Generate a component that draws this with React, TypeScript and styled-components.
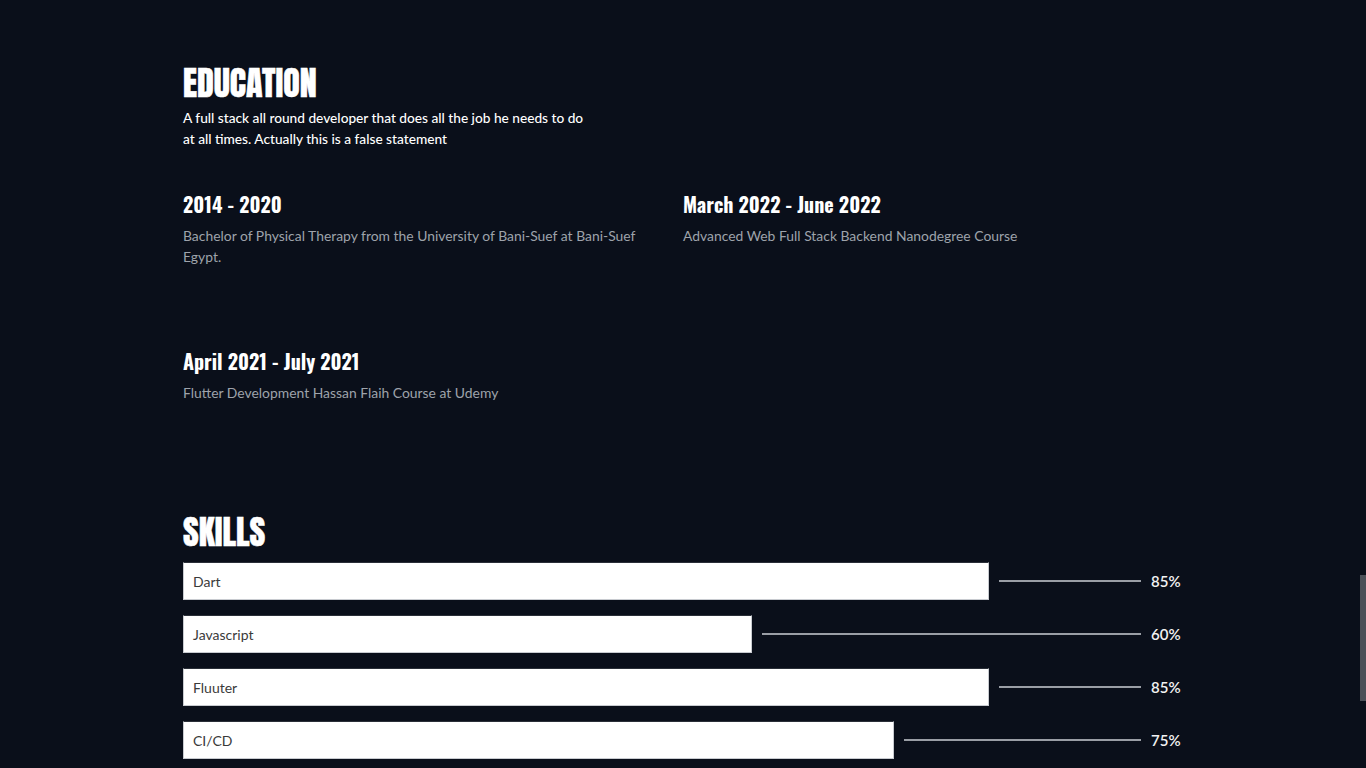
import styled, { createGlobalStyle } from "styled-components";

type Education = {
  period: string;
  text: string;
};

type Skill = {
  name: string;
  level: number;
};

const education: Education[] = [
  {
    period: "2014 - 2020",
    text: "Bachelor of Physical Therapy from the University of Bani-Suef at Bani-Suef Egypt.",
  },
  {
    period: "March 2022 - June 2022",
    text: "Advanced Web Full Stack Backend Nanodegree Course",
  },
  {
    period: "April 2021 - July 2021",
    text: "Flutter Development Hassan Flaih Course at Udemy",
  },
];

const skills: Skill[] = [
  { name: "Dart", level: 85 },
  { name: "Javascript", level: 60 },
  { name: "Fluuter", level: 85 },
  { name: "CI/CD", level: 75 },
];

// track width the bars are measured against
const TRACK = 948;

const GlobalStyle = createGlobalStyle`
  html, body {
    margin: 0;
    padding: 0;
    background-color: #0a0f1a;
    overflow: hidden;
  }
  body {
    font-family: Lato, "Noto Sans", sans-serif;
    color: #fff;
  }
`;

const Page = styled.main`
  width: 1000px;
  margin: 0 auto;
  padding-top: 60px;
`;

const Section = styled.section`
  margin-bottom: 80px;
`;

const Title = styled.h2`
  margin: 0 0 3px;
  padding-top: 2px;
  font-family: "Anton", "Oswald", "Liberation Sans Narrow", "DejaVu Sans Condensed", sans-serif;
  font-weight: 400;
  font-size: 34px;
  line-height: 42px;
  letter-spacing: 0;
  -webkit-text-stroke: 0.5px #fff;
  text-transform: uppercase;
`;

const Intro = styled.p`
  margin: 0 0 40px;
  max-width: 410px;
  font-size: 13.7px;
  font-weight: 500;
  line-height: 21px;
  color: #fff;
`;

const EduGrid = styled.div`
  display: grid;
  grid-template-columns: 1fr 1fr;
  row-gap: 74px;
`;

const EduItem = styled.div`
  min-height: 83px;
`;

const Period = styled.h3`
  margin: 0 0 6px;
  font-family: "Oswald", "Liberation Sans Narrow", "DejaVu Sans Condensed", sans-serif;
  font-weight: 700;
  font-size: 20px;
  line-height: 30px;
`;

const EduText = styled.p`
  margin: 0;
  max-width: 460px;
  font-size: 13.9px;
  line-height: 21px;
  color: #9ea3ab;
`;

const SkillList = styled.div`
  display: flex;
  flex-direction: column;
  gap: 15px;
  margin-top: 9px;
`;

const SkillRow = styled.div`
  display: flex;
  align-items: center;
  gap: 10px;
`;

const Bar = styled.div`
  box-sizing: border-box;
  height: 38px;
  display: flex;
  align-items: center;
  padding: 0 9px;
  background: #fff;
  border: 1px solid #c8cbd0;
  border-top-color: #2a2f38;
  color: #3a3a3a;
  font-size: 14px;
  flex-shrink: 0;
`;

const Line = styled.div`
  flex: 1;
  height: 2px;
  background: #9a9ea5;
`;

const Percent = styled.span`
  width: 32px;
  font-size: 15px;
  font-weight: 600;
  color: #f2f2f2;
`;

const ScrollThumb = styled.div`
  position: fixed;
  right: 0;
  top: 575px;
  width: 6px;
  height: 126px;
  background: #4b5058;
`;

export default function App() {
  return (
    <>
      <GlobalStyle />
      <Page>
        <Section>
          <Title>Education</Title>
          <Intro>
            A full stack all round developer that does all the job he needs to do at all times.
            Actually this is a false statement
          </Intro>
          <EduGrid>
            {education.map((item) => (
              <EduItem key={item.period}>
                <Period>{item.period}</Period>
                <EduText>{item.text}</EduText>
              </EduItem>
            ))}
          </EduGrid>
        </Section>
        <Section>
          <Title>Skills</Title>
          <SkillList>
            {skills.map((s) => (
              <SkillRow key={s.name}>
                <Bar style={{ width: `${(s.level / 100) * TRACK}px` }}>{s.name}</Bar>
                <Line />
                <Percent>{s.level}%</Percent>
              </SkillRow>
            ))}
          </SkillList>
        </Section>
      </Page>
      <ScrollThumb />
    </>
  );
}
